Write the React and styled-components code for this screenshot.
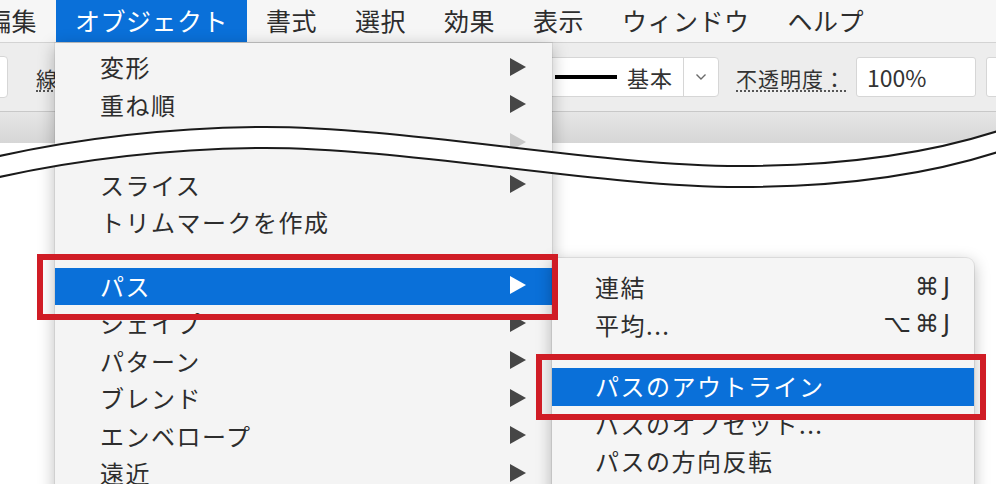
import React from "react";
import styled, { createGlobalStyle } from "styled-components";

const GlobalStyle = createGlobalStyle`
  *, *::before, *::after { box-sizing: border-box; }
  html, body { margin: 0; padding: 0; }
  body {
    width: 996px;
    height: 484px;
    overflow: hidden;
    background: #fff;
    font-family: "Noto Sans CJK JP", "Noto Sans", sans-serif;
    color: #2d2d2d;
  }
`;

const menuTitles = ["編集", "オブジェクト", "書式", "選択", "効果", "表示", "ウィンドウ", "ヘルプ"];

// the third row sits under the tear, only its grey arrow peeks out
const objectMenu = [
  { label: "変形", sub: true },
  { label: "重ね順", sub: true },
  { label: "", sub: true, disabled: true },
  { gap: 5 },
  { label: "スライス", sub: true },
  { label: "トリムマークを作成" },
  { gap: 26 },
  { label: "パス", sub: true, active: true },
  { label: "シェイプ", sub: true },
  { label: "パターン", sub: true },
  { label: "ブレンド", sub: true },
  { label: "エンベロープ", sub: true },
  { label: "遠近", sub: true },
];

const pathMenu = [
  { label: "連結", key: "⌘J" },
  { label: "平均...", key: "⌥⌘J" },
  { gap: 24 },
  { label: "パスのアウトライン", active: true },
  { label: "パスのオフセット..." },
  { label: "パスの方向反転" },
];

const App = () => {
  return (
    <Screen>
      <GlobalStyle />
      <MenuBar>
        {menuTitles.map((title) => (
          <MenuTitle key={title} $active={title === "オブジェクト"}>
            {title}
          </MenuTitle>
        ))}
      </MenuBar>

      <Toolbar>
        <FieldStub />
        <ToolLabel>線</ToolLabel>
        <StrokeSelect>
          <StrokeSample>
            <StrokeLine />
          </StrokeSample>
          <StrokeName>基本</StrokeName>
          <ChevronPart>
            <svg width="12" height="8" viewBox="0 0 12 8">
              <path d="M1.5 1.5 L6 6 L10.5 1.5" fill="none" stroke="#6a6a6a" strokeWidth="1.4" />
            </svg>
          </ChevronPart>
        </StrokeSelect>
        <OpacityLabel>不透明度：</OpacityLabel>
        <OpacityInput>100%</OpacityInput>
        <NextBox />
      </Toolbar>

      <TabStrip />
      <Canvas />

      <DropMenu>
        {objectMenu.map((item, i) =>
          item.gap ? (
            <MenuGap key={i} $h={item.gap} />
          ) : (
            <MenuRow key={i} $active={item.active} $disabled={item.disabled}>
              <span>{item.label}</span>
              {item.sub && <Arrow $active={item.active} $disabled={item.disabled} />}
            </MenuRow>
          )
        )}
      </DropMenu>

      <SubMenu>
        {pathMenu.map((item, i) =>
          item.gap ? (
            <MenuGap key={i} $h={item.gap} />
          ) : (
            <SubRow key={item.label} $active={item.active}>
              <span>{item.label}</span>
              {item.key && <Shortcut>{item.key}</Shortcut>}
            </SubRow>
          )
        )}
      </SubMenu>

      <Tear viewBox="0 0 996 484" width="996" height="484">
        <path
          d="M-5 157 C80 138, 170 128, 260 127 C400 126, 600 166, 740 166 C860 166, 940 150, 1001 130
             L1001 151 C940 171, 860 187, 740 187 C600 187, 400 147, 260 148 C170 149, 80 159, -5 178 Z"
          fill="#fff"
        />
        <path
          d="M-5 157 C80 138, 170 128, 260 127 C400 126, 600 166, 740 166 C860 166, 940 150, 1001 130"
          fill="none"
          stroke="#1a1a1a"
          strokeWidth="2"
        />
        <path
          d="M-5 178 C80 159, 170 149, 260 148 C400 147, 600 187, 740 187 C860 187, 940 171, 1001 151"
          fill="none"
          stroke="#1a1a1a"
          strokeWidth="2"
        />
      </Tear>

      <RedFrame $left={37} $top={254} $width={521} />
      <RedFrame $left={536} $top={354} $width={450} />
    </Screen>
  );
};

const Screen = styled.div`
  position: relative;
  width: 996px;
  height: 484px;
  overflow: hidden;
  display: flex;
  flex-direction: column;
  background: #fff;
`;

const MenuBar = styled.div`
  display: flex;
  flex-shrink: 0;
  height: 43px;
  margin-left: -33px;
  background: #f6f6f6;
  border-bottom: 1px solid #d3d3d3;
`;

const MenuTitle = styled.div`
  display: flex;
  align-items: center;
  flex-shrink: 0;
  height: 42px;
  padding: 0 19px 3px;
  font-size: 25px;
  letter-spacing: 0.5px;
  white-space: nowrap;
  color: ${(p) => (p.$active ? "#fff" : "#2d2d2d")};
  background: ${(p) => (p.$active ? "#0a70d9" : "transparent")};
`;

const Toolbar = styled.div`
  display: flex;
  align-items: center;
  flex-shrink: 0;
  height: 69px;
  background: #ededed;
  border-bottom: 1px solid #c8c8c8;

  & > * {
    flex-shrink: 0;
  }
`;

const FieldStub = styled.div`
  width: 30px;
  height: 42px;
  margin-left: -22px;
  background: #fff;
  border: 1px solid #d6d6d6;
  border-radius: 4px;
`;

const ToolLabel = styled.span`
  margin-left: 28px;
  margin-top: 4px;
  font-size: 21px;
  color: #333;
  border-bottom: 2px dotted #555;
  line-height: 24px;
  white-space: nowrap;
`;

const StrokeSelect = styled.div`
  display: flex;
  align-items: stretch;
  width: 238px;
  height: 40px;
  margin-left: 424px;
  background: #fff;
  border: 1px solid #d6d6d6;
  border-radius: 4px;
`;

const StrokeSample = styled.div`
  flex: 1;
  display: flex;
  align-items: center;
  justify-content: flex-end;
  padding-right: 10px;
`;

const StrokeLine = styled.div`
  width: 62px;
  height: 4px;
  background: #000;
`;

const StrokeName = styled.div`
  display: flex;
  align-items: center;
  padding-right: 10px;
  font-size: 22px;
  letter-spacing: 1px;
  color: #333;
  white-space: nowrap;
`;

const ChevronPart = styled.div`
  display: flex;
  align-items: center;
  justify-content: center;
  width: 35px;
  border-left: 1px solid #d6d6d6;
`;

const OpacityLabel = styled.span`
  margin-left: 17px;
  margin-top: 4px;
  font-size: 21px;
  letter-spacing: 1px;
  color: #333;
  line-height: 24px;
  white-space: nowrap;
  border-bottom: 2px dotted #555;
`;

const OpacityInput = styled.div`
  display: flex;
  align-items: center;
  width: 120px;
  height: 40px;
  margin-left: 10px;
  padding-left: 10px;
  background: #fff;
  border: 1px solid #d6d6d6;
  border-radius: 3px;
  font-size: 23px;
  color: #333;
`;

const NextBox = styled.div`
  width: 40px;
  height: 40px;
  margin-left: 10px;
  background: #fff;
  border: 1px solid #d6d6d6;
  border-radius: 3px;
`;

const TabStrip = styled.div`
  flex-shrink: 0;
  height: 31px;
  background: linear-gradient(#e6e6e6, #d6d6d6);
`;

const Canvas = styled.div`
  flex: 1;
  background: #fff;
`;

const DropMenu = styled.div`
  position: absolute;
  left: 55px;
  top: 43px;
  bottom: -20px;
  width: 497px;
  padding-top: 6px;
  background: #f4f4f4;
  box-shadow: 0 4px 16px rgba(0, 0, 0, 0.28), 0 0 0 1px rgba(0, 0, 0, 0.06);
  z-index: 2;
`;

const MenuGap = styled.div`
  height: ${(p) => p.$h}px;
`;

const MenuRow = styled.div`
  display: flex;
  align-items: center;
  justify-content: space-between;
  height: 37.5px;
  padding: 0 26px 2px 45px;
  font-size: 24px;
  letter-spacing: 1.5px;
  white-space: nowrap;
  color: ${(p) => (p.$active ? "#fff" : p.$disabled ? "#b8b8b8" : "#2d2d2d")};
  background: ${(p) => (p.$active ? "#0a70d9" : "transparent")};
`;

const Arrow = styled.span`
  width: 0;
  height: 0;
  border-top: 9px solid transparent;
  border-bottom: 9px solid transparent;
  border-left: 16px solid
    ${(p) => (p.$active ? "#fff" : p.$disabled ? "#c9c9c9" : "#464646")};
`;

const SubMenu = styled.div`
  position: absolute;
  left: 552px;
  top: 258px;
  bottom: -20px;
  width: 422px;
  padding-top: 11px;
  background: #f5f5f5;
  border-radius: 0 8px 0 0;
  box-shadow: 0 4px 16px rgba(0, 0, 0, 0.28), 0 0 0 1px rgba(0, 0, 0, 0.07);
  z-index: 3;
`;

const SubRow = styled.div`
  display: flex;
  align-items: center;
  justify-content: space-between;
  height: 37.5px;
  padding: 0 24px 2px 43px;
  font-size: 24px;
  letter-spacing: 1.5px;
  white-space: nowrap;
  color: ${(p) => (p.$active ? "#fff" : "#2d2d2d")};
  background: ${(p) => (p.$active ? "#0a70d9" : "transparent")};
`;

const Shortcut = styled.span`
  font-family: "DejaVu Sans", "Noto Sans CJK JP", sans-serif;
  font-size: 24px;
  letter-spacing: 4px;
  margin-right: -4px;
  color: #2d2d2d;
`;

const Tear = styled.svg`
  position: absolute;
  left: 0;
  top: 0;
  pointer-events: none;
  z-index: 4;
`;

const RedFrame = styled.div`
  position: absolute;
  left: ${(p) => p.$left}px;
  top: ${(p) => p.$top}px;
  width: ${(p) => p.$width}px;
  height: 66px;
  border: 6px solid #d01c25;
  z-index: 5;
`;

export default App;
